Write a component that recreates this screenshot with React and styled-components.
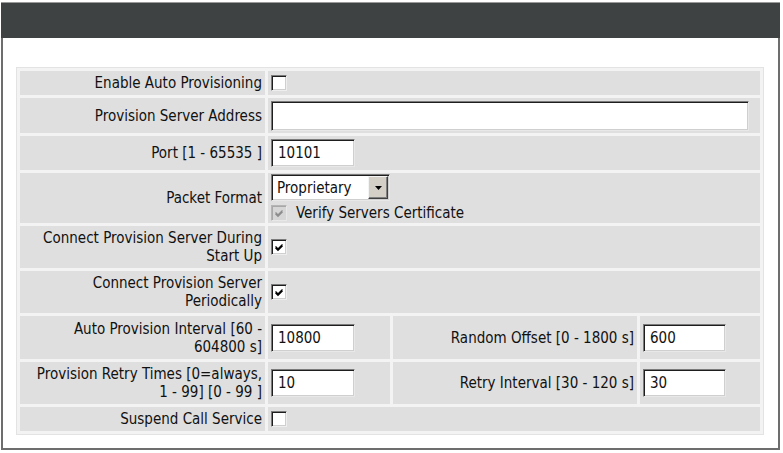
import React from "react";
import styled, { createGlobalStyle } from "styled-components";

const GlobalStyle = createGlobalStyle`
  html, body { margin: 0; padding: 0; background: #fff; }
  body {
    font-family: "DejaVu Sans Condensed", "DejaVu Sans", "Liberation Sans", sans-serif;
    font-size: 15px;
    color: #111;
  }
`;

const Frame = styled.div`
  margin: 2px 0 0 1px;
  width: 779px;
  height: 448px;
  box-sizing: border-box;
  border-top: 1px solid #9a9a9a;
  display: flex;
  flex-direction: column;
`;

const Header = styled.div`
  flex: none;
  height: 35px;
  background: #3e4243;
`;

const Body = styled.div`
  flex: 1;
  border: 2px solid #6d6d6d;
  border-top: none;
  padding: 29px 13px 0 13px;
`;

const Table = styled.table`
  border-collapse: separate;
  border-spacing: 3px;
  border: 1px solid #e3e3e3;
  background: #f3f3f3;
  table-layout: fixed;
  width: 748px;
`;

const Col = styled.col`
  width: ${(p) => p.$w}px;
`;

const Cell = styled.td`
  background: #dfdfdf;
  height: ${(p) => p.$h}px;
  padding: 0 3px;
  vertical-align: middle;
  line-height: 18px;
  text-align: ${(p) => (p.$label ? "right" : "left")};
  white-space: nowrap;
`;

const TextInput = styled.input`
  display: block;
  box-sizing: border-box;
  width: ${(p) => p.$w}px;
  height: ${(p) => p.$h || 28}px;
  margin: 0;
  padding: 0 6px;
  border: 1px solid;
  border-color: #7b7b7b #e8e8e8 #e8e8e8 #7b7b7b;
  box-shadow: inset 1px 1px 0 #1e1e1e, inset -1px -1px 0 #cfcfcf;
  background: #fff;
  font: inherit;
  color: #111;
  outline: none;
`;

const Stack = styled.div`
  display: flex;
  flex-direction: column;
  align-items: flex-start;
  gap: 3px;
`;

const SelectWrap = styled.div`
  position: relative;
  width: 119px;
  height: 27px;
`;

const Select = styled.select`
  appearance: none;
  -webkit-appearance: none;
  box-sizing: border-box;
  width: 100%;
  height: 100%;
  margin: 0;
  padding: 0 0 0 5px;
  border: 1px solid;
  border-color: #7b7b7b #e8e8e8 #e8e8e8 #7b7b7b;
  box-shadow: inset 1px 1px 0 #1e1e1e, inset -1px -1px 0 #cfcfcf;
  background: #fff;
  font: inherit;
  color: #111;
  outline: none;
`;

const DropButton = styled.span`
  position: absolute;
  top: 2px;
  right: 2px;
  bottom: 2px;
  width: 20px;
  box-sizing: border-box;
  background: #d4d0c8;
  border: 1px solid;
  border-color: #f4f4f4 #404040 #404040 #f4f4f4;
  box-shadow: inset -1px -1px 0 #808080;
  display: flex;
  align-items: center;
  justify-content: center;
  pointer-events: none;
`;

const CheckRow = styled.label`
  display: flex;
  align-items: center;
  gap: 9px;
`;

const Box = styled.span`
  display: inline-flex;
  align-items: center;
  justify-content: center;
  vertical-align: middle;
  box-sizing: border-box;
  width: 16px;
  height: 16px;
  border: 1px solid;
  border-color: ${(p) =>
    p.$disabled ? "#b5b5b5 #e8e8e8 #e8e8e8 #b5b5b5" : "#7b7b7b #eeeeee #eeeeee #7b7b7b"};
  box-shadow: ${(p) =>
    p.$disabled
      ? "inset 1px 1px 0 #a8a8a8"
      : "inset 1px 1px 0 #1e1e1e, inset -1px -1px 0 #cfcfcf"};
  background: ${(p) => (p.$disabled ? "#d6d6d6" : "#fff")};
`;

const CheckCell = styled.div`
  display: flex;
  align-items: center;
`;

function CheckBox({ checked, disabled }) {
  return (
    <Box $disabled={disabled} role="checkbox" aria-checked={checked}>
      {checked && (
        <svg width="10" height="9" viewBox="0 0 10 9">
          <path
            d="M1.5 3.5 L4 6 L8.5 1.5 M1.5 4.8 L4 7.3 L8.5 2.8"
            fill="none"
            stroke={disabled ? "#8d8d8d" : "#000"}
            strokeWidth="1.4"
          />
        </svg>
      )}
    </Box>
  );
}

export default function App() {
  return (
    <>
      <GlobalStyle />
      <Frame>
        <Header />
        <Body>
          <Table>
            <colgroup>
              <Col $w={245} />
              <Col $w={122} />
              <Col $w={244} />
              <Col $w={120} />
            </colgroup>
            <tbody>
              <tr>
                <Cell $label $h={24}>Enable Auto Provisioning</Cell>
                <Cell colSpan={3}>
                  <CheckCell><CheckBox /></CheckCell>
                </Cell>
              </tr>
              <tr>
                <Cell $label $h={35}>Provision Server Address</Cell>
                <Cell colSpan={3}>
                  <TextInput $w={478} $h={30} defaultValue="" />
                </Cell>
              </tr>
              <tr>
                <Cell $label $h={34}>Port [1 - 65535 ]</Cell>
                <Cell colSpan={3}>
                  <TextInput $w={84} $h={28} defaultValue="10101" />
                </Cell>
              </tr>
              <tr>
                <Cell $label $h={50}>Packet Format</Cell>
                <Cell colSpan={3}>
                  <Stack>
                    <SelectWrap>
                      <Select defaultValue="Proprietary">
                        <option>Proprietary</option>
                      </Select>
                      <DropButton>
                        <svg width="7" height="4" viewBox="0 0 7 4">
                          <path d="M0 0 H7 L3.5 4 Z" fill="#000" />
                        </svg>
                      </DropButton>
                    </SelectWrap>
                    <CheckRow>
                      <CheckBox checked disabled />
                      Verify Servers Certificate
                    </CheckRow>
                  </Stack>
                </Cell>
              </tr>
              <tr>
                <Cell $label $h={42}>
                  Connect Provision Server During
                  <br />
                  Start Up
                </Cell>
                <Cell colSpan={3}>
                  <CheckCell><CheckBox checked /></CheckCell>
                </Cell>
              </tr>
              <tr>
                <Cell $label $h={42}>
                  Connect Provision Server
                  <br />
                  Periodically
                </Cell>
                <Cell colSpan={3}>
                  <CheckCell><CheckBox checked /></CheckCell>
                </Cell>
              </tr>
              <tr>
                <Cell $label $h={43}>
                  Auto Provision Interval [60 -
                  <br />
                  604800 s]
                </Cell>
                <Cell>
                  <TextInput $w={84} defaultValue="10800" />
                </Cell>
                <Cell $label>Random Offset [0 - 1800 s]</Cell>
                <Cell>
                  <TextInput $w={83} defaultValue="600" />
                </Cell>
              </tr>
              <tr>
                <Cell $label $h={42}>
                  Provision Retry Times [0=always,
                  <br />
                  1 - 99] [0 - 99 ]
                </Cell>
                <Cell>
                  <TextInput $w={84} defaultValue="10" />
                </Cell>
                <Cell $label>Retry Interval [30 - 120 s]</Cell>
                <Cell>
                  <TextInput $w={83} defaultValue="30" />
                </Cell>
              </tr>
              <tr>
                <Cell $label $h={24}>Suspend Call Service</Cell>
                <Cell colSpan={3}>
                  <CheckCell><CheckBox /></CheckCell>
                </Cell>
              </tr>
            </tbody>
          </Table>
        </Body>
      </Frame>
    </>
  );
}
